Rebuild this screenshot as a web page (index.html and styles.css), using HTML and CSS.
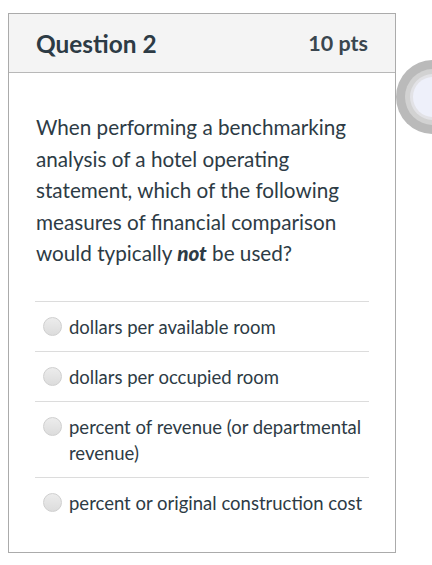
FILE: index.html
```html
<!DOCTYPE html>
<html>
<head>
<meta charset="utf-8">
<link rel="stylesheet" href="styles.css">
</head>
<body>
<div class="page">
  <div class="card">
    <div class="card-header">
      <span class="q-title">Question 2</span>
      <span class="q-pts">10 pts</span>
    </div>
    <div class="card-body">
      <p class="q-text">When performing a benchmarking analysis of a hotel operating statement, which of the following measures of financial comparison would typically <strong><em>not</em></strong> be used?</p>
      <div class="answers">
        <label class="answer"><span class="radio"></span><span class="a-text">dollars per available room</span></label>
        <label class="answer"><span class="radio"></span><span class="a-text">dollars per occupied room</span></label>
        <label class="answer"><span class="radio"></span><span class="a-text">percent of revenue (or departmental revenue)</span></label>
        <label class="answer"><span class="radio"></span><span class="a-text">percent or original construction cost</span></label>
      </div>
    </div>
  </div>
  <div class="spinner"><div class="ring2"><div class="ring3"><div class="core"></div></div></div></div>
</div>
</body>
</html>
```
FILE: styles.css
```css
html, body {
  margin: 0;
  padding: 0;
  background: #ffffff;
}
body {
  font-family: Lato, "Open Sans", sans-serif;
  color: #2d3b45;
  overflow: hidden;
}
.page {
  position: relative;
  width: 432px;
  height: 565px;
  padding: 13px 0 0 8px;
  box-sizing: border-box;
  overflow: hidden;
}
.card {
  width: 388px;
  height: 540px;
  box-sizing: border-box;
  border: 1px solid #ababab;
  display: flex;
  flex-direction: column;
}
.card-header {
  height: 59px;
  box-sizing: border-box;
  background: #f4f4f4;
  border-bottom: 1px solid #b8b8b8;
  display: flex;
  align-items: center;
  justify-content: space-between;
  padding: 0 27px 0 27px;
}
.q-title {
  font-weight: 700;
  font-size: 24.4px;
  color: #2d3b45;
}
.q-pts {
  font-weight: 700;
  font-size: 21.5px;
  color: #3a464f;
}
.card-body {
  padding: 39px 26px 0 26px;
}
.q-text {
  margin: 0 0 31px 1px;
  font-size: 20.7px;
  line-height: 31.5px;
}
.q-text strong {
  font-weight: 900;
}
.answers {
  display: flex;
  flex-direction: column;
}
.answer {
  display: flex;
  align-items: flex-start;
  gap: 7px;
  padding: 12px 0 11px 8px;
  border-top: 1px solid #dcdcdc;
  font-size: 18.5px;
  line-height: 26px;
}
.radio {
  flex: none;
  width: 19px;
  height: 19px;
  margin-top: 3px;
  box-sizing: border-box;
  border-radius: 50%;
  border: 1px solid #cfcfcf;
  background: linear-gradient(#ececec, #dcdcdc);
}
.spinner {
  position: absolute;
  left: 396px;
  top: 60px;
  width: 74px;
  height: 74px;
  border-radius: 50%;
  background: #bababa;
  display: flex;
  align-items: center;
  justify-content: center;
}
.ring2 {
  width: 56px;
  height: 56px;
  border-radius: 50%;
  background: #d2d2d2;
  display: flex;
  align-items: center;
  justify-content: center;
}
.ring3 {
  width: 46px;
  height: 46px;
  border-radius: 50%;
  background: #e2e2e6;
  display: flex;
  align-items: center;
  justify-content: center;
}
.core {
  width: 40px;
  height: 40px;
  border-radius: 50%;
  background: #eef0fa;
}
```
